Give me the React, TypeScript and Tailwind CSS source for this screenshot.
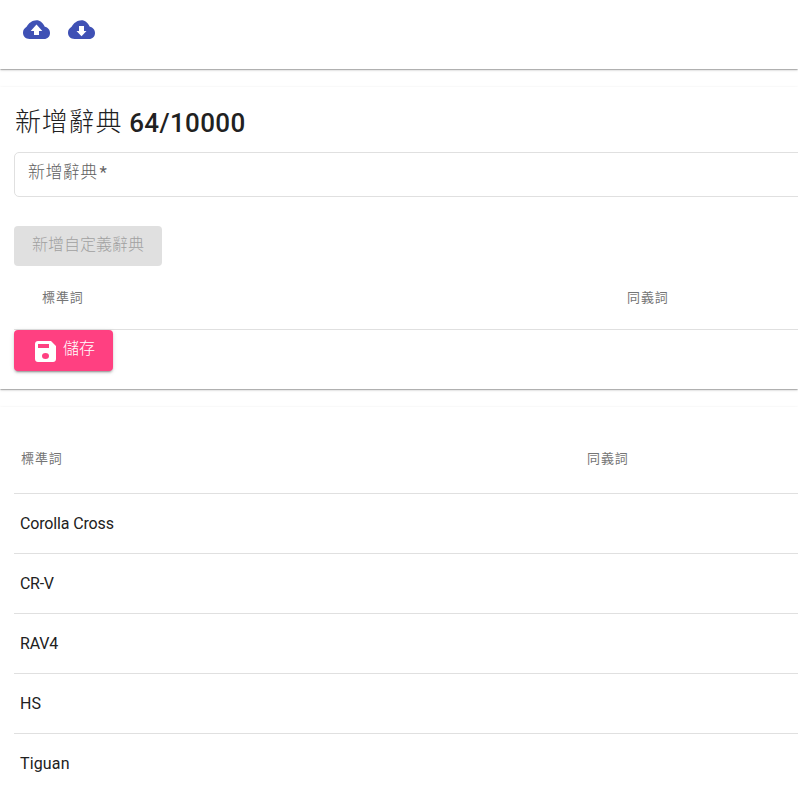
const words = [
  { text: "Corolla Cross", tracking: "tracking-[-0.15px]" },
  { text: "CR-V", tracking: "tracking-[-0.3px]" },
  { text: "RAV4", tracking: "tracking-[-0.2px]" },
  { text: "HS", tracking: "tracking-[0px]" },
  { text: "Tiguan", tracking: "tracking-[0.15px]" },
];

const card =
  "bg-white shadow-[0_2px_1px_-1px_rgba(0,0,0,0.15),0_1px_1px_0_rgba(0,0,0,0.11),0_1px_3px_0_rgba(0,0,0,0.14)]";

function CloudIcon({ arrow }: { arrow: string }) {
  return (
    <svg width="27" height="27" viewBox="0 0 27 27" fill="currentColor">
      <path
        fillRule="evenodd"
        d={`M13.5 4.3C17.2 4.3 19.8 6.8 21.8 10.8C25 11.4 27 14 27 17C27 20.5 24.6 23 21 23H6.5C2.7 23 0 20.3 0 16.8C0 14 1.4 12.2 3.6 10.8C5.6 7.2 9.4 4.3 13.5 4.3Z${arrow}`}
      />
    </svg>
  );
}

function SaveIcon() {
  return (
    <svg width="21" height="21" viewBox="0 0 21 21" fill="currentColor">
      <path
        fillRule="evenodd"
        d="M3 0H16L21 5V18C21 19.7 19.7 21 18 21H3C1.3 21 0 19.7 0 18V3C0 1.3 1.3 0 3 0ZM3 3V7H14V3ZM10.5 12A3.5 3 0 1 0 10.5 18A3.5 3 0 1 0 10.5 12Z"
      />
    </svg>
  );
}

export default function App() {
  return (
    <div className="flex h-[793px] w-[798px] flex-col gap-[18px] overflow-hidden bg-white font-['Roboto','Noto_Sans_CJK_TC',sans-serif] text-[#212121]">
      <header className={`${card} flex h-[69px] shrink-0 items-start gap-[18px] pt-[16px] pl-[23px] text-[#3f51b5]`}>
        <CloudIcon arrow="M13.5 8.5L7.7 15H11V19H16V15H19.3Z" />
        <CloudIcon arrow="M11 10V15H8.5L13.5 20.3L18.5 15H16V10Z" />
      </header>

      <section className={`${card} flex h-[302px] shrink-0 flex-col pl-[14px]`}>
        <h1 className="mt-[18px] flex h-[35px] items-center gap-[7px] pl-px leading-[35px] whitespace-nowrap">
          <span className="text-[26px] font-light tracking-[0.8px]">新增辭典</span>
          <span className="pt-[2px] text-[26px] font-medium tracking-[0.35px]">64/10000</span>
        </h1>
        <div className="mt-[12px] -mr-[10px] h-[45px] shrink-0 rounded-[5px] border border-[#e0e0e0] pl-[13px] text-[17px] leading-[38px] font-light text-[#616161]">
          <span className="tracking-[0.4px]">新增辭典</span>
          <span className="ml-[2px] font-normal">*</span>
        </div>
        <button disabled className="mt-[29px] h-[40px] w-[148px] shrink-0 rounded-[4px] bg-[#e0e0e0] pb-[2px] text-[16px] font-light text-[#a0a0a0]">
          新增自定義辭典
        </button>
        <div className="flex h-[64px] shrink-0 items-center border-b border-[#e0e0e0] pt-px pl-[28px] text-[13px] tracking-[0.9px] text-[#757575]">
          <span className="w-[585px]">標準詞</span>
          <span>同義詞</span>
        </div>
        <button className="flex h-[41px] w-[99px] shrink-0 items-center rounded-[4px] bg-[#ff4081] pl-[21px] text-[16px] font-light text-white shadow-[0_3px_1px_-2px_rgba(0,0,0,0.2),0_2px_2px_0_rgba(0,0,0,0.14),0_1px_5px_0_rgba(0,0,0,0.12)]">
          <span className="mt-[2px]">
            <SaveIcon />
          </span>
          <span className="mb-[3px] ml-[7px]">儲存</span>
        </button>
      </section>

      <section className={`${card} flex h-[400px] shrink-0 flex-col pl-[14px]`}>
        <div className="flex h-[87px] shrink-0 items-center border-b border-[#e0e0e0] pt-[18px] pl-[7px] text-[13px] tracking-[0.9px] text-[#757575]">
          <span className="w-[566px]">標準詞</span>
          <span>同義詞</span>
        </div>
        {words.map(({ text, tracking }) => (
          <div key={text} className={`${tracking} flex h-[60px] shrink-0 items-center border-b border-[#e0e0e0] pl-[6px] text-[16px]`}>
            {text}
          </div>
        ))}
      </section>
    </div>
  );
}
